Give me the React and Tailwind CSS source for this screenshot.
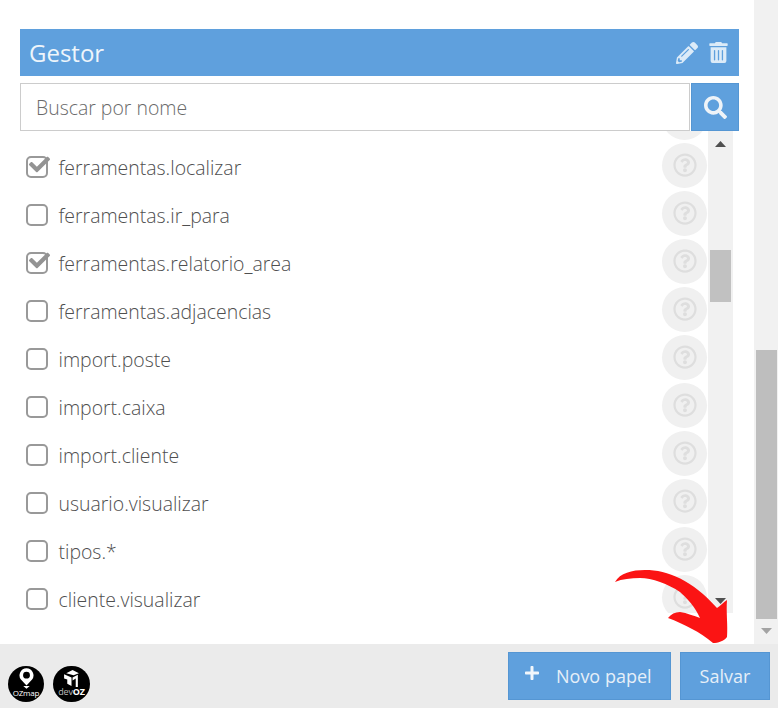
import React from "react";
import { FaPencilAlt, FaTrashAlt, FaSearch, FaRegQuestionCircle, FaCheck, FaPlus } from "react-icons/fa";

const rows = [
  ["ferramentas.localizar", true],
  ["ferramentas.ir_para", false],
  ["ferramentas.relatorio_area", true],
  ["ferramentas.adjacencias", false],
  ["import.poste", false],
  ["import.caixa", false],
  ["import.cliente", false],
  ["usuario.visualizar", false],
  ["tipos.*", false],
  ["cliente.visualizar", false],
];

function Help() {
  return (
    <div className="ml-auto mb-1 mr-px flex h-[45px] w-[45px] shrink-0 items-center justify-center rounded-full bg-[#f0f0f0] text-[#dedede]">
      <FaRegQuestionCircle className="h-[24px] w-[24px]" />
    </div>
  );
}

function Row({ label, checked }) {
  return (
    <div className="flex h-12 items-center pl-[6px]">
      <div className="relative h-[22px] w-[22px] shrink-0 rounded-[5px] border-2 border-[#999999] bg-white">
        {checked && <FaCheck className="absolute -top-[4px] left-[1px] h-[21px] w-[21px] text-[#939393]" />}
      </div>
      <span className="ml-[10.500px] pt-[2px] text-[19.450px] font-light leading-6 text-[#4f4f4f]">{label}</span>
      <Help />
    </div>
  );
}

export default function App() {
  return (
    <div className="relative flex h-[708px] w-[778px] flex-col overflow-hidden bg-white font-['Open_Sans',sans-serif]">
      <div className="flex h-[644px] shrink-0">
        <main className="flex w-[754px] shrink-0 flex-col pl-5 pr-[15px] pt-[29px]">
          <div className="flex h-[47px] shrink-0 items-center bg-[#5fa0dd] pl-[9px] pr-[11px] text-[#eef5fb]">
            <h1 className="text-[24px] font-normal leading-8">Gestor</h1>
            <FaPencilAlt className="ml-auto h-[22px] w-[22px] text-[#dcebf8]" />
            <FaTrashAlt className="ml-[11px] h-[21px] w-[19px] text-[#dcebf8]" />
          </div>
          <div className="mt-[7px] flex h-[48px] shrink-0">
            <div className="flex min-w-0 flex-1 items-center border border-[#cccccc] bg-white pl-[15px] pt-[2px]">
              <span className="text-[19.450px] font-light text-[#6a6a6a]">Buscar por nome</span>
            </div>
            <div className="ml-px flex w-[48px] shrink-0 items-center justify-center border border-[#5596d3] bg-[#5fa0dd] text-[#eef3f8]">
              <FaSearch className="h-[23px] w-[23px]" />
            </div>
          </div>
          <div className="flex h-[482px] shrink-0 overflow-hidden pr-[6px]">
            <div className="min-w-0 flex-1 overflow-hidden">
              <div className="-mt-[36px] flex h-12 items-center">
                <Help />
              </div>
              {rows.map(([label, checked]) => (
                <Row key={label} label={label} checked={checked} />
              ))}
            </div>
            <div className="flex w-[25px] shrink-0 flex-col items-center bg-[#f1f1f1]">
              <svg className="mt-[10px] shrink-0" width="11" height="6" viewBox="0 0 11 6"><path d="M5.5 0 11 6H0z" fill="#505050" /></svg>
              <div className="mt-[103px] h-[52px] w-[21px] shrink-0 bg-[#c1c1c1]" />
              <svg className="mt-auto mb-[9px] shrink-0" width="11" height="6" viewBox="0 0 11 6"><path d="M0 0h11L5.5 6z" fill="#505050" /></svg>
            </div>
          </div>
        </main>
        <aside className="flex w-[24px] shrink-0 flex-col items-center bg-[#f1f1f1]">
          <div className="mt-[350px] h-[269px] w-[21px] shrink-0 bg-[#bebebe]" />
          <svg className="mt-[9px] shrink-0" width="11" height="6" viewBox="0 0 11 6"><path d="M0 0h11L5.5 6z" fill="#a3a3a3" /></svg>
        </aside>
      </div>

      <footer className="flex h-[64px] shrink-0 items-center bg-[#ebebeb] pl-2 pr-2">
        <div className="mt-[16px] flex h-[36px] w-[36px] shrink-0 flex-col items-center rounded-full bg-black pt-[2px] text-white">
          <svg width="15" height="21" viewBox="0 0 14 19" className="shrink-0">
            <path fillRule="evenodd" d="M7 0a6.5 6.5 0 0 1 5.200 10.400L7 16 1.800 10.400A6.500 6.500 0 0 1 7 0zm0 3.200a3.200 3.200 0 1 0 0 6.400 3.200 3.200 0 0 0 0-6.400zM4 16.500h6L7 19z" fill="#fff" />
          </svg>
          <span className="text-[8px] leading-[8px] tracking-tight">OZmap</span>
        </div>
        <div className="ml-[9px] mt-[16px] flex h-[36px] w-[37px] shrink-0 flex-col items-center rounded-full bg-black pt-[4px] text-white">
          <svg width="17" height="18" viewBox="0 0 16 17" className="shrink-0">
            <path d="M3 3l6-3 6 3-5 2zM1 4l7 3v8L4 13V9L1 8zM9 7l5-2.500V16h-2V8l-3 2z" fill="#fff" />
          </svg>
          <span className="-mt-px text-[9px] leading-[9px] tracking-tight text-[#bbbbbb]">dev<b className="text-white">OZ</b></span>
        </div>
        <button className="ml-auto flex h-[48px] w-[163px] shrink-0 items-center border border-[#5596d3] bg-[#5fa0dd] pl-[15px] text-[18px] text-[#e6eff8]">
          <FaPlus className="mb-[6px] h-[16px] w-[16px] text-[#f1f6fb]" />
          <span className="ml-[16px]">Novo papel</span>
        </button>
        <button className="ml-[9px] flex h-[48px] w-[90px] shrink-0 items-center justify-center border border-[#5596d3] bg-[#5fa0dd] text-[18px] text-[#e6eff8]">
          Salvar
        </button>
      </footer>

      <svg className="pointer-events-none absolute left-[610px] top-[565px]" width="125" height="85" viewBox="610 565 125 85">
        <path
          d="M615 582C620 573 632 570 645 570C668 570 692 580 717 608C720 606 724 602 727 600C726 612 728 626 727 637C724 641 718 643 713 643C700 632 684 624 668 618C671 614 675 612 680 612C687 613 694 616 700 618C695 607 688 599 680 592C668 584 652 578 640 578C631 578 622 579 615 582Z"
          fill="#fb1414"
        />
      </svg>
    </div>
  );
}
